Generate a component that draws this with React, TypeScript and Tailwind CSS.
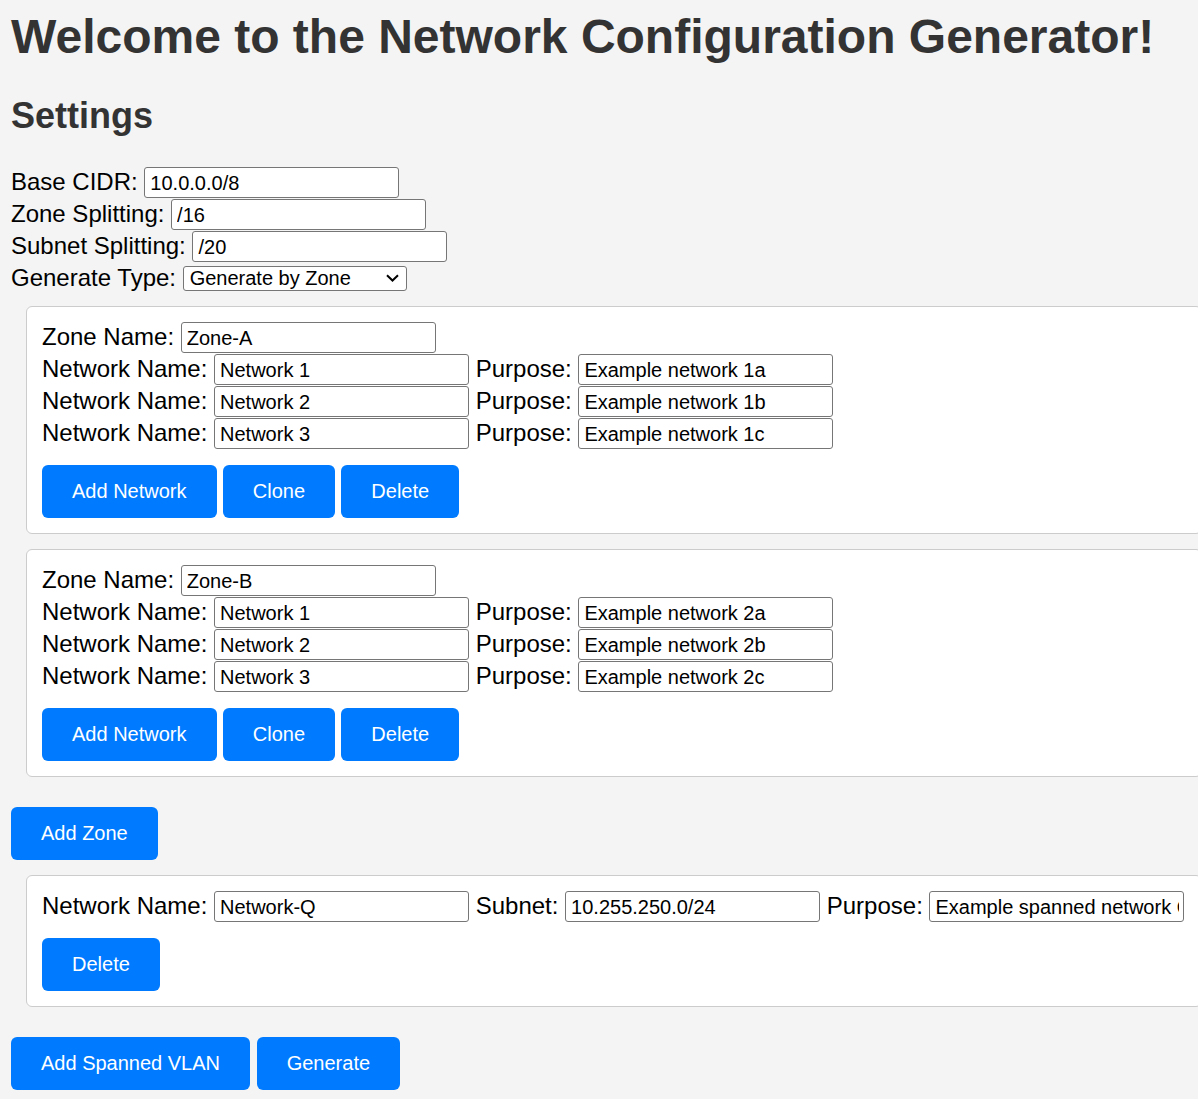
import React, { useState } from 'react';

interface Network {
  name: string;
  purpose: string;
}

interface Zone {
  name: string;
  networks: Network[];
}

interface SpannedVlan {
  name: string;
  subnet: string;
  purpose: string;
}

const inputClass =
  'h-[31px] w-[255px] shrink-0 rounded-[3px] border border-[#767676] bg-white pl-[5px] pr-[4px] pt-[1px] text-[20px] text-black outline-none';

const buttonClass =
  'h-[53px] shrink-0 rounded-[6px] bg-[#007bff] px-[30px] pb-[1px] text-[20px] text-white hover:bg-[#0069d9]';

const Field: React.FC<{ label: string; value: string; onChange: (v: string) => void }> = ({ label, value, onChange }) => (
  <>
    <span className="flex h-[31px] shrink-0 items-center whitespace-nowrap pb-[2px]">{label}</span>
    <input className={inputClass} value={value} onChange={(e) => onChange(e.target.value)} />
  </>
);

const App: React.FC = () => {
  const [baseCidr, setBaseCidr] = useState('10.0.0.0/8');
  const [zoneSplit, setZoneSplit] = useState('/16');
  const [subnetSplit, setSubnetSplit] = useState('/20');
  const [genType, setGenType] = useState('zone');

  const [zones, setZones] = useState<Zone[]>([
    {
      name: 'Zone-A',
      networks: [
        { name: 'Network 1', purpose: 'Example network 1a' },
        { name: 'Network 2', purpose: 'Example network 1b' },
        { name: 'Network 3', purpose: 'Example network 1c' },
      ],
    },
    {
      name: 'Zone-B',
      networks: [
        { name: 'Network 1', purpose: 'Example network 2a' },
        { name: 'Network 2', purpose: 'Example network 2b' },
        { name: 'Network 3', purpose: 'Example network 2c' },
      ],
    },
  ]);

  const [vlans, setVlans] = useState<SpannedVlan[]>([
    { name: 'Network-Q', subnet: '10.255.250.0/24', purpose: 'Example spanned network Q' },
  ]);

  const updateZone = (zi: number, fn: (z: Zone) => Zone) =>
    setZones((prev) => prev.map((z, i) => (i === zi ? fn(z) : z)));

  const updateNetwork = (zi: number, ni: number, patch: Partial<Network>) =>
    updateZone(zi, (z) => ({ ...z, networks: z.networks.map((n, j) => (j === ni ? { ...n, ...patch } : n)) }));

  const updateVlan = (vi: number, patch: Partial<SpannedVlan>) =>
    setVlans((prev) => prev.map((v, i) => (i === vi ? { ...v, ...patch } : v)));

  return (
    <div className="min-h-screen overflow-hidden bg-[#f4f4f4] px-[11px] pb-[20px] pt-[9px] font-['Liberation_Sans',Arial,sans-serif] text-[24px] text-black">
      <h1 className="whitespace-nowrap text-[48px] font-bold leading-[55px] text-[#333]">
        Welcome to the Network Configuration Generator!
      </h1>
      <h2 className="mt-[31px] text-[36px] font-bold leading-[41px] text-[#333]">Settings</h2>

      <div className="mt-[31px]">
        <div className="flex h-[32px] items-start gap-[6.67px]">
          <Field label="Base CIDR:" value={baseCidr} onChange={setBaseCidr} />
        </div>
        <div className="flex h-[32px] items-start gap-[6.67px]">
          <Field label="Zone Splitting:" value={zoneSplit} onChange={setZoneSplit} />
        </div>
        <div className="flex h-[32px] items-start gap-[6.67px]">
          <Field label="Subnet Splitting:" value={subnetSplit} onChange={setSubnetSplit} />
        </div>
        <div className="flex h-[30px] items-center gap-[6.67px]">
          <span className="pb-[1px]">Generate Type:</span>
          <div className="relative flex">
            <select
              value={genType}
              onChange={(e) => setGenType(e.target.value)}
              className="h-[25px] w-[224px] appearance-none rounded-[3px] border border-[#767676] bg-white py-0 pl-[6px] text-[20px] leading-[23px] text-black outline-none"
            >
              <option value="zone">Generate by Zone</option>
              <option value="subnet">Generate by Subnet</option>
            </select>
            <svg
              className="pointer-events-none absolute right-[8px] top-[8.5px]"
              width="13"
              height="8"
              viewBox="0 0 13 8"
              fill="none"
            >
              <path d="M1 1.2 L6.5 6.5 L12 1.2" stroke="#000" strokeWidth="2" />
            </svg>
          </div>
        </div>
      </div>

      <div className="mt-[13px]">
        {zones.map((zone, zi) => (
          <div
            key={zi}
            className="mb-[15px] ml-[15px] w-full rounded-[6px] border border-[#cccccc] bg-white p-[15px]"
          >
            <div className="flex h-[32px] items-start gap-[6.67px]">
              <Field
                label="Zone Name:"
                value={zone.name}
                onChange={(v) => updateZone(zi, (z) => ({ ...z, name: v }))}
              />
            </div>
            {zone.networks.map((net, ni) => (
              <div key={ni} className="flex h-[32px] items-start gap-[6.67px]">
                <Field label="Network Name:" value={net.name} onChange={(v) => updateNetwork(zi, ni, { name: v })} />
                <Field label="Purpose:" value={net.purpose} onChange={(v) => updateNetwork(zi, ni, { purpose: v })} />
              </div>
            ))}
            <div className="mt-[15px] flex gap-[6.3px]">
              <button
                className={buttonClass}
                onClick={() => updateZone(zi, (z) => ({ ...z, networks: [...z.networks, { name: '', purpose: '' }] }))}
              >
                Add Network
              </button>
              <button
                className={buttonClass}
                onClick={() => setZones((prev) => [...prev.slice(0, zi + 1), { ...zone }, ...prev.slice(zi + 1)])}
              >
                Clone
              </button>
              <button className={buttonClass} onClick={() => setZones((prev) => prev.filter((_, i) => i !== zi))}>
                Delete
              </button>
            </div>
          </div>
        ))}
      </div>

      <button
        className={`${buttonClass} mt-[15px]`}
        onClick={() => setZones((prev) => [...prev, { name: '', networks: [] }])}
      >
        Add Zone
      </button>

      <div className="mt-[15px]">
        {vlans.map((vlan, vi) => (
          <div
            key={vi}
            className="ml-[15px] w-full rounded-[6px] border border-[#cccccc] bg-white p-[15px]"
          >
            <div className="flex h-[32px] items-start gap-[6.67px]">
              <Field label="Network Name:" value={vlan.name} onChange={(v) => updateVlan(vi, { name: v })} />
              <Field label="Subnet:" value={vlan.subnet} onChange={(v) => updateVlan(vi, { subnet: v })} />
              <Field label="Purpose:" value={vlan.purpose} onChange={(v) => updateVlan(vi, { purpose: v })} />
            </div>
            <div className="mt-[15px] flex">
              <button className={buttonClass} onClick={() => setVlans((prev) => prev.filter((_, i) => i !== vi))}>
                Delete
              </button>
            </div>
          </div>
        ))}
      </div>

      <div className="mt-[30px] flex gap-[6.67px]">
        <button
          className={buttonClass}
          onClick={() => setVlans((prev) => [...prev, { name: '', subnet: '', purpose: '' }])}
        >
          Add Spanned VLAN
        </button>
        <button className={buttonClass}>Generate</button>
      </div>
    </div>
  );
};

export default App;
